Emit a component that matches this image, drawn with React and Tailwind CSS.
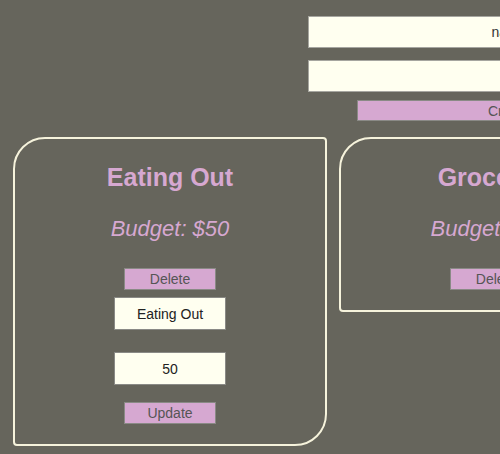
import React, { useState } from 'react';

const initialBudgets = [
  { name: 'Eating Out', amount: 50, editing: true },
  { name: 'Groceries', amount: 200, editing: false },
];

function BudgetCard({ budget }) {
  const [name, setName] = useState(budget.name);
  const [amount, setAmount] = useState(String(budget.amount));

  return (
    <div className="w-[314px] shrink-0 border-2 border-[#f6f3dc] rounded-tl-[32px] rounded-br-[32px] rounded-tr-[4px] rounded-bl-[4px] pt-[23px] pb-[20px] flex flex-col items-center">
      <h2 className="text-[25px] leading-[30px] font-bold text-[#d6a8d1]">{budget.name}</h2>
      <p className="mt-[24px] text-[22px] leading-[26px] italic text-[#d6a8d1]">Budget: ${budget.amount}</p>
      <button className="mt-[26px] w-[92px] h-[22px] bg-[#d6a8d1] border border-[#8a8a86] text-[14px] leading-none text-[#555]">
        Delete
      </button>
      {budget.editing && (
        <>
          <input
            value={name}
            onChange={(e) => setName(e.target.value)}
            className="mt-[7px] w-[112px] h-[33px] bg-[#fffff0] border border-[#8a8a86] text-center text-[14px] text-[#222] outline-none"
          />
          <input
            value={amount}
            onChange={(e) => setAmount(e.target.value)}
            className="mt-[22px] w-[112px] h-[33px] bg-[#fffff0] border border-[#8a8a86] text-center text-[14px] text-[#222] outline-none"
          />
          <button className="mt-[17px] w-[92px] h-[22px] bg-[#d6a8d1] border border-[#8a8a86] text-[14px] leading-none text-[#555]">
            Update
          </button>
        </>
      )}
    </div>
  );
}

export default function App() {
  const [budgets] = useState(initialBudgets);

  return (
    <div className="w-full h-[454px] overflow-hidden bg-[#66655c] font-['Liberation_Sans',Arial,sans-serif]">
      <div className="w-[1018px]">
        {/* new budget form */}
        <div className="flex flex-col items-center pt-[16px]">
          <input
            defaultValue="name"
            className="w-[402px] h-[32px] bg-[#fffff0] border border-[#a6a6a0] text-center text-[14px] text-[#333] outline-none"
          />
          <input className="mt-[12px] w-[402px] h-[32px] bg-[#fffff0] border border-[#a6a6a0] text-center text-[14px] text-[#333] outline-none" />
          <button className="mt-[8px] w-[304px] h-[21px] bg-[#d6a8d1] border border-[#8a8a86] text-[14px] leading-none text-[#555]">
            Create
          </button>
        </div>

        {/* budget list */}
        <div className="flex items-start gap-[12px] pl-[13px] mt-[16px]">
          {budgets.map((b) => (
            <BudgetCard key={b.name} budget={b} />
          ))}
        </div>
      </div>
    </div>
  );
}
